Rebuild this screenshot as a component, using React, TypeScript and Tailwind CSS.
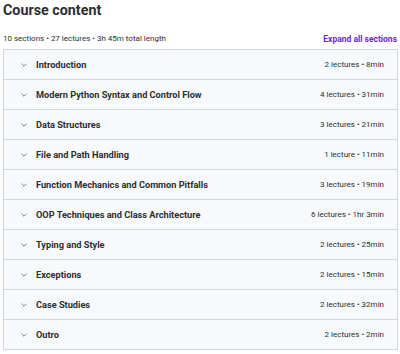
import React from "react";

const sections = [
  ["Introduction", "2 lectures • 8min"],
  ["Modern Python Syntax and Control Flow", "4 lectures • 31min"],
  ["Data Structures", "3 lectures • 21min"],
  ["File and Path Handling", "1 lecture • 11min"],
  ["Function Mechanics and Common Pitfalls", "3 lectures • 19min"],
  ["OOP Techniques and Class Architecture", "6 lectures • 1hr 3min"],
  ["Typing and Style", "2 lectures • 25min"],
  ["Exceptions", "2 lectures • 15min"],
  ["Case Studies", "2 lectures • 32min"],
  ["Outro", "2 lectures • 2min"],
];

function Chevron() {
  return (
    <svg width="8" height="8" viewBox="0 0 8 8" fill="none" className="shrink-0">
      <path d="M1.8 3 L4 5.2 L6.2 3" stroke="#6a6f73" strokeWidth="0.9" strokeLinecap="round" strokeLinejoin="round" />
    </svg>
  );
}

export default function App() {
  return (
    <div className="w-[400px] h-[354px] bg-white px-[3px] text-[#2d2f31]" style={{ fontFamily: "Roboto, 'Noto Sans', sans-serif" }}>
      <h2 className="pt-[1px] text-[14.3px] leading-[19px] font-bold">Course content</h2>
      <div className="mt-[13px] flex items-end justify-between">
        <span className="text-[8px] leading-[12px] text-[#2d2f31]">10 sections • 27 lectures • 3h 45m total length</span>
        <span className="text-[8.5px] leading-[12px] font-bold text-[#6d28d2]">Expand all sections</span>
      </div>
      <div className="mt-[4px] w-[395px] border border-[#d1d7dc] bg-[#f7f9fa]">
        {sections.map(([t, m], i) => (
          <div key={t} className={`flex items-center pl-[16px] pr-[13px] ${i > 0 ? "h-[30px] border-t border-[#d1d7dc]" : "h-[29px]"}`}>
            <Chevron />
            <span className="ml-[8px] flex-1 text-[9.2px] font-bold">{t}</span>
            <span className="text-[8px] text-[#2d2f31]">{m}</span>
          </div>
        ))}
      </div>
    </div>
  );
}
